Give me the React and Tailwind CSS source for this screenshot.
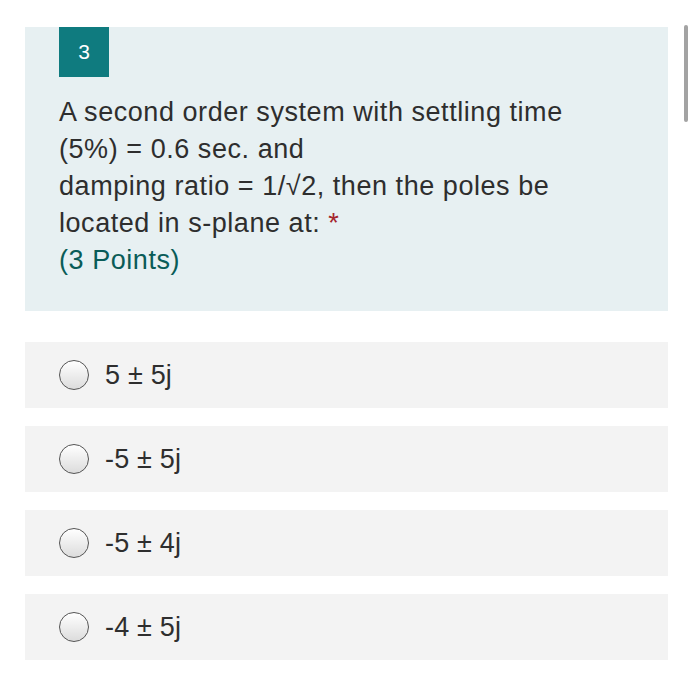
export default function App() {
  const opts = ["5 ± 5j", "-5 ± 5j", "-5 ± 4j", "-4 ± 5j"];
  return (
    <div className="relative w-[695px] h-[700px] bg-white" style={{ fontFamily: '"Liberation Sans", Arial, sans-serif' }}>
      <div className="absolute left-[684px] top-[25px] w-[4px] h-[97px] rounded-full bg-[#a3a3a3]" />
      <div className="pt-[27px] pl-[25px] w-[668px]">
        <div className="w-[643px] h-[284px] bg-[#e7f0f2] pl-[34px]">
          <div className="w-[50px] h-[50px] bg-[#0f7b7f] flex items-center justify-center text-white text-[21px]">3</div>
          <div className="mt-[17px] text-[27px] leading-[37px] text-[#2e2e2e] tracking-[0.55px]">
            <div>A second order system with settling time</div>
            <div>(5%) = 0.6 sec. and</div>
            <div>damping ratio = 1/√2, then the poles be</div>
            <div>located in s-plane at: <span className="text-[#a4262c]">*</span></div>
            <div className="text-[#0a5c58]">(3 Points)</div>
          </div>
        </div>
        <div className="mt-[31px] flex flex-col gap-[18px]">
          {opts.map((o) => (
            <div key={o} className="w-[643px] h-[66px] bg-[#f3f3f3] flex items-center pl-[34px]">
              <div className="w-[30px] h-[30px] rounded-full border-[1.5px] border-[#555] bg-gradient-to-b from-white to-[#dcdcdc]" />
              <div className="ml-[16px] text-[27px] text-[#2e2e2e] tracking-[0.2px]">{o}</div>
            </div>
          ))}
        </div>
      </div>
    </div>
  );
}
